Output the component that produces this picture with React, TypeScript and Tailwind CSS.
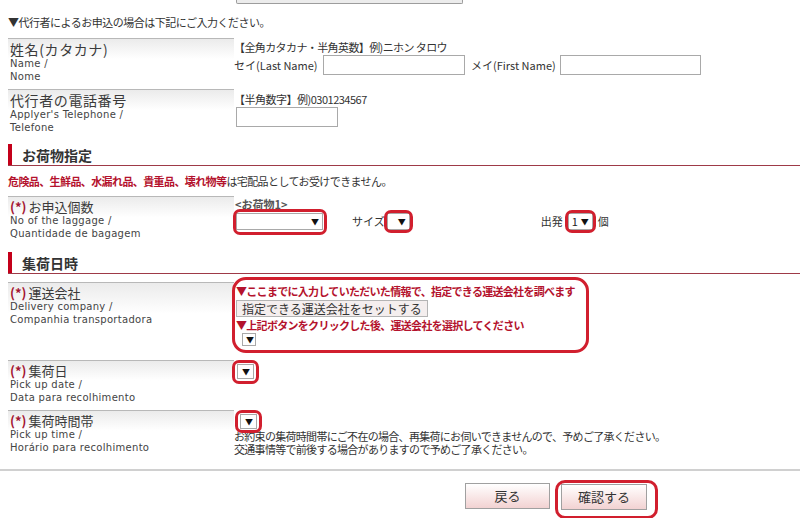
import type { ReactNode } from "react";

function Mark({ className }: { className: string }) {
  return (
    <span
      className={
        "pointer-events-none absolute rounded-[7px] border-[3px] border-[#d11f2e] " +
        className
      }
    />
  );
}

function Select({
  className,
  value,
  mark,
}: {
  className: string;
  value?: string;
  mark?: string;
}) {
  return (
    <span
      className={
        "relative flex shrink-0 items-center justify-between border border-[#a9a9a9] bg-white pl-[3px] pr-[3px] " +
        className
      }
    >
      <span className="text-[11px] leading-none text-[#222]">{value}</span>
      <span className="text-[8px] leading-none text-[#111]">▼</span>
      {mark && <Mark className={mark} />}
    </span>
  );
}

function Input({ className }: { className: string }) {
  return (
    <span
      className={"block h-[20px] shrink-0 border border-[#a9a9a9] bg-white " + className}
    />
  );
}

function Label({
  req,
  jp,
  en1,
  en2,
  big,
}: {
  req?: boolean;
  jp: string;
  en1: string;
  en2: string;
  big?: boolean;
}) {
  return (
    <div className="ml-[8px] w-[226px] shrink-0 border-t border-[#b8b8b8] bg-linear-to-b from-[#ebebeb] to-white to-40% pl-[2px] pt-[3px]">
      <div
        className={
          big
            ? "text-[14px] leading-[15px] tracking-[0.6px] text-[#3a3a3a]"
            : "text-[13px] leading-[14px] text-[#3a3a3a]"
        }
      >
        {req && <span className="mr-[2px] font-bold text-[#a31431]">(*)</span>}
        {jp}
      </div>
      <div className="font-['DejaVu_Sans',sans-serif] text-[10px] leading-[13px] tracking-[0.3px] text-[#444]">
        {en1}
      </div>
      <div className="font-['DejaVu_Sans',sans-serif] text-[10px] leading-[13px] tracking-[0.3px] text-[#444]">
        {en2}
      </div>
    </div>
  );
}

function SectionHead({ title }: { title: string }) {
  return (
    <div className="ml-[8px] flex h-[22px] border-b border-[#9e3a48]">
      <span className="w-[4px] bg-[#c4001a]" />
      <span className="ml-[10px] self-center text-[14px] font-bold leading-[16px] text-[#333]">
        {title}
      </span>
    </div>
  );
}

function Row({ className, children }: { className: string; children: ReactNode }) {
  return <div className={"flex " + className}>{children}</div>;
}

export default function App() {
  return (
    <div className="h-[518px] w-[800px] overflow-hidden bg-white font-['Noto_Sans_CJK_JP',sans-serif] text-[#333]">
      {/* bottom of a button from the block above */}
      <div className="ml-[236px] h-[4px] w-[227px] rounded-b-[2px] border-x border-b border-[#9d9d9d] bg-[#ececec]" />

      <p className="mt-[11px] pl-[8px] text-[11px] leading-[14px] tracking-[-0.5px]">
        ▼代行者によるお申込の場合は下記にご入力ください。
      </p>

      {/* name */}
      <Row className="mt-[9px] h-[51px]">
        <Label big jp="姓名(カタカナ)" en1="Name /" en2="Nome" />
        <div className="pt-[2px] text-[11px]">
          <div className="leading-[14px] tracking-[-0.6px]">
            【全角カタカナ・半角英数】例)ニホン タロウ
          </div>
          <div className="mt-[1px] flex items-center">
            <span className="w-[89px]">セイ(Last Name)</span>
            <Input className="w-[142px]" />
            <span className="ml-[6px] w-[89px]">メイ(First Name)</span>
            <Input className="w-[141px]" />
          </div>
        </div>
      </Row>

      {/* telephone */}
      <Row className="h-[51px]">
        <Label big jp="代行者の電話番号" en1="Applyer's Telephone /" en2="Telefone" />
        <div className="pt-[3px] text-[11px]">
          <div className="leading-[14px] tracking-[-0.5px]">【半角数字】例)0301234567</div>
          <Input className="ml-[2px] mt-[1px] w-[102px]" />
        </div>
      </Row>

      <div className="mt-[4px]">
        <SectionHead title="お荷物指定" />
      </div>

      <p className="mt-[8px] pl-[8px] text-[11px] leading-[14px] tracking-[-0.6px]">
        <span className="font-bold text-[#b4122d]">
          危険品、生鮮品、水漏れ品、貴重品、壊れ物等
        </span>
        は宅配品としてお受けできません。
      </p>

      {/* number of luggage */}
      <Row className="mt-[8px] h-[52px]">
        <Label req jp="お申込個数" en1="No of the laggage /" en2="Quantidade de bagagem" />
        <div className="pt-[2px] text-[11px]">
          <div className="ml-[1px] font-bold leading-[13px] text-[#555]">&lt;お荷物1&gt;</div>
          <div className="mt-[2px] flex items-center">
            <Select className="ml-[2px] h-[17px] w-[87px]" mark="-top-[5px] -bottom-[6px] -left-[4px] -right-[5px]" />
            <span className="ml-[29px]">サイズ</span>
            <Select className="ml-[2px] h-[17px] w-[23px]" mark="-inset-[4px]" />
            <span className="ml-[131px]">出発</span>
            <Select className="ml-[5px] h-[17px] w-[25px]" value="1" mark="-inset-[4px]" />
            <span className="ml-[5px]">個</span>
          </div>
        </div>
      </Row>

      <div className="mt-[4px]">
        <SectionHead title="集荷日時" />
      </div>

      {/* delivery company */}
      <Row className="mt-[8px] h-[78px]">
        <Label req jp="運送会社" en1="Delivery company /" en2="Companhia transportadora" />
        <div className="relative pl-[2px] pt-[2px] text-[11px]">
          <Mark className="-left-[2px] -top-[5px] h-[76px] w-[357px] rounded-[14px]" />
          <div className="font-bold leading-[14px] tracking-[-0.7px] text-[#b4122d]">
            ▼ここまでに入力していただいた情報で、指定できる運送会社を調べます
          </div>
          <div className="mt-[2px] inline-flex h-[17px] items-center border border-[#b4b4b4] bg-[#f4eeee] px-[5px] text-[12px] leading-none text-[#333]">
            指定できる運送会社をセットする
          </div>
          <div className="mt-[1px] font-bold leading-[14px] tracking-[-0.7px] text-[#b4122d]">
            ▼上記ボタンをクリックした後、運送会社を選択してください
          </div>
          <Select className="ml-[6px] mt-[1px] h-[13px] w-[14px] pl-[1px] pr-[2px]" />
        </div>
      </Row>

      {/* pick up date */}
      <Row className="h-[50px]">
        <Label req jp="集荷日" en1="Pick up date /" en2="Data para recolhimento" />
        <div className="pl-[3px] pt-[4px]">
          <Select className="h-[15px] w-[17px] pl-[1px] pr-[3px]" mark="-top-[5px] -bottom-[6px] -left-[6px] -right-[6px]" />
        </div>
      </Row>

      {/* pick up time */}
      <Row className="h-[50px]">
        <Label req jp="集荷時間帯" en1="Pick up time /" en2="Horário para recolhimento" />
        <div className="pt-[4px] text-[11px]">
          <Select className="ml-[6px] h-[15px] w-[17px] pl-[1px] pr-[3px]" mark="-top-[5px] -bottom-[5px] -left-[6px] -right-[6px]" />
          <p className="mt-[1px] leading-[13px] tracking-[-0.7px]">
            お約束の集荷時間帯にご不在の場合、再集荷にお伺いできませんので、予めご了承ください。
            <br />
            交通事情等で前後する場合がありますので予めご了承ください。
          </p>
        </div>
      </Row>

      <div className="mt-[9px] border-t-2 border-[#d0d0d0]" />

      {/* buttons */}
      <div className="mt-[12px] flex pl-[465px]">
        <button className="h-[26px] w-[85px] border border-[#a0a0a0] bg-linear-to-b from-white to-[#f2d2d2] text-[13px] text-[#333]">
          戻る
        </button>
        <span className="relative ml-[11px]">
          <button className="h-[26px] w-[86px] border border-[#a0a0a0] bg-linear-to-b from-white to-[#f2d2d2] text-[13px] text-[#333]">
            確認する
          </button>
          <Mark className="-bottom-[9px] -left-[6px] -right-[11px] -top-[3px] rounded-[10px]" />
        </span>
      </div>
    </div>
  );
}
